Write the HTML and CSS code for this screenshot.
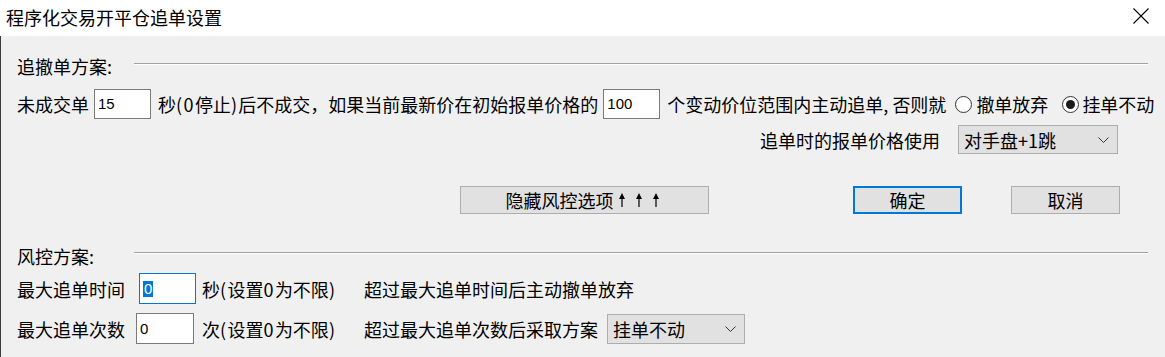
FILE: index.html
```html
<!DOCTYPE html>
<html lang="zh-CN">
<head>
<meta charset="utf-8">
<title>程序化交易开平仓追单设置</title>
<link rel="stylesheet" href="styles.css">
</head>
<body>
<div class="window">
  <div class="titlebar">
    <span class="title">程序化交易开平仓追单设置</span>
    <svg class="close" width="16" height="16" viewBox="0 0 16 16"><path d="M0.5 0.5 L15.5 15.5 M15.5 0.5 L0.5 15.5" stroke="#000" stroke-width="1.1" fill="none"/></svg>
  </div>
  <div class="content">
    <div class="sec-head sec-head-1">
      <span class="sec-label">追撤单方案:</span>
      <span class="etched"></span>
    </div>
    <div class="row row1">
      <span>未成交单</span>
      <span class="input w57 ml5">15</span>
      <span class="ml7">秒<span class="hw">(0</span>停止<span class="hw">)</span>后不成交，如果当前最新价在初始报单价格的</span>
      <span class="input w57 ml5">100</span>
      <span class="ml7">个变动价位范围内主动追单<span class="hwc">,</span>否则就</span>
      <span class="radio ml9"></span>
      <span class="ml4">撤单放弃</span>
      <span class="radio checked ml14"></span>
      <span class="ml3">挂单不动</span>
    </div>
    <div class="row row2">
      <span>追单时的报单价格使用</span>
      <span class="select sel-price">
        <span>对手盘+1跳</span>
        <svg class="chev" width="11" height="6" viewBox="0 0 11 6"><path d="M0.5 0.5 L5.5 5.5 L10.5 0.5" stroke="#333" stroke-width="1" fill="none"/></svg>
      </span>
    </div>
    <div class="row buttons">
      <span class="btn btn-hide">隐藏风控选项<svg class="arrows" width="50" height="16" viewBox="0 0 50 16"><g fill="#000"><path d="M8 1 L11 7 L8.6 7 L8.6 15 L7.4 15 L7.4 7 L5 7 Z"/><path d="M25 1 L28 7 L25.6 7 L25.6 15 L24.4 15 L24.4 7 L22 7 Z"/><path d="M42 1 L45 7 L42.6 7 L42.6 15 L41.4 15 L41.4 7 L39 7 Z"/></g></svg></span>
      <span class="btn btn-ok">确定</span>
      <span class="btn btn-cancel">取消</span>
    </div>
    <div class="sec-head sec-head-2">
      <span class="sec-label">风控方案:</span>
      <span class="etched"></span>
    </div>
    <div class="row row3">
      <span class="lbl">最大追单时间</span>
      <span class="input focus w57 in-a"><span class="sel-text">0</span></span>
      <span class="desc">秒<span class="hw">(</span>设置<span class="hw">0</span>为不限<span class="hw">)</span></span>
      <span>超过最大追单时间后主动撤单放弃</span>
    </div>
    <div class="row row4">
      <span class="lbl">最大追单次数</span>
      <span class="input w58 in-b">0</span>
      <span class="desc">次<span class="hw">(</span>设置<span class="hw">0</span>为不限<span class="hw">)</span></span>
      <span>超过最大追单次数后采取方案</span>
      <span class="select sel-plan">
        <span>挂单不动</span>
        <svg class="chev" width="11" height="6" viewBox="0 0 11 6"><path d="M0.5 0.5 L5.5 5.5 L10.5 0.5" stroke="#333" stroke-width="1" fill="none"/></svg>
      </span>
    </div>
  </div>
</div>
</body>
</html>
```
FILE: styles.css
```css
* { box-sizing: border-box; }
html, body {
  margin: 0;
  padding: 0;
  width: 1165px;
  height: 357px;
  overflow: hidden;
  background: #f0f0f0;
  font-family: "Noto Sans CJK SC", "Noto Sans", sans-serif;
  font-size: 18px;
  color: #000;
}
.window {
  width: 1165px;
  height: 357px;
  display: flex;
  flex-direction: column;
}
.titlebar {
  height: 36px;
  background: #fff;
  display: flex;
  align-items: center;
  justify-content: space-between;
  padding: 0 16px 0 6px;
  line-height: 24px;
  flex: none;
}
.title { font-size: 18px; margin-top: -2px; }
.close { display: block; margin-top: -4px; }
.content {
  flex: 1;
  border-left: 1px solid #3c3c3c;
  padding: 0 17px 0 16px;
  display: flex;
  flex-direction: column;
}
.sec-head {
  height: 24px;
  display: flex;
  line-height: 24px;
  flex: none;
}
.sec-head-1 { margin-top: 18px; }
.sec-head-2 { margin-top: 30px; }
.sec-label { width: 117px; flex: none; }
.etched {
  flex: 1;
  height: 2px;
  border-top: 1px solid #a0a0a0;
  border-bottom: 1px solid #fff;
  margin-top: 9px;
}
.sec-head-2 .etched { margin-top: 8px; }
.row {
  display: flex;
  align-items: center;
  line-height: 24px;
  white-space: nowrap;
  flex: none;
}
.row1 { margin-top: 11px; height: 30px; }
.row2 { margin-top: 6px; height: 29px; justify-content: flex-end; padding-right: 30px; }
.buttons { margin-top: 32px; height: 28px; }
.row3 { margin-top: 5px; height: 31px; }
.row4 { margin-top: 9px; height: 31px; }

.hw { letter-spacing: 1.4px; }
.hwc { letter-spacing: 4px; }

.ml3 { margin-left: 3px; }
.ml4 { margin-left: 4px; }
.ml5 { margin-left: 5px; }
.ml7 { margin-left: 7px; }
.ml9 { margin-left: 9px; }
.ml14 { margin-left: 14px; }

.input {
  height: 30px;
  background: #fff;
  border: 1px solid #7a7a7a;
  font-family: "Liberation Sans", Arial, sans-serif;
  font-size: 15px;
  line-height: 28px;
  padding-left: 3px;
  display: flex;
  align-items: center;
  flex: none;
}
.row3 .input, .row4 .input { height: 31px; }
.w57 { width: 57px; }
.w58 { width: 58px; }
.input.focus { border-color: #0078d7; }
.sel-text {
  background: #0078d7;
  color: #fff;
  line-height: 16px;
  padding: 0 1px;
}
.lbl { width: 122px; flex: none; }
.in-a { margin-left: 0; }
.in-b { margin-left: -3px; }
.desc { margin-left: 6px; width: 162px; flex: none; }
.row4 .desc { margin-left: 8px; }

.radio {
  width: 17px;
  height: 17px;
  border: 1px solid #333;
  border-radius: 50%;
  background: #fff;
  display: flex;
  align-items: center;
  justify-content: center;
  flex: none;
}
.radio.checked::after {
  content: "";
  width: 9px;
  height: 9px;
  border-radius: 50%;
  background: #1a1a1a;
}

.select {
  height: 29px;
  background: #e1e1e1;
  border: 1px solid #adadad;
  display: flex;
  align-items: center;
  justify-content: space-between;
  padding: 0 8px 0 5px;
  flex: none;
}
.sel-price { width: 160px; margin-left: 18px; }
.sel-plan { width: 138px; margin-left: 9px; height: 30px; }
.chev { display: block; }

.btn {
  height: 28px;
  background: #e1e1e1;
  border: 1px solid #adadad;
  display: flex;
  align-items: center;
  justify-content: center;
  flex: none;
}
.arrows { display: block; }
.btn-hide { width: 249px; margin-left: 443px; }
.btn-ok { width: 109px; margin-left: 144px; border: 2px solid #0078d7; }
.btn-cancel { width: 109px; margin-left: 49px; }
```
